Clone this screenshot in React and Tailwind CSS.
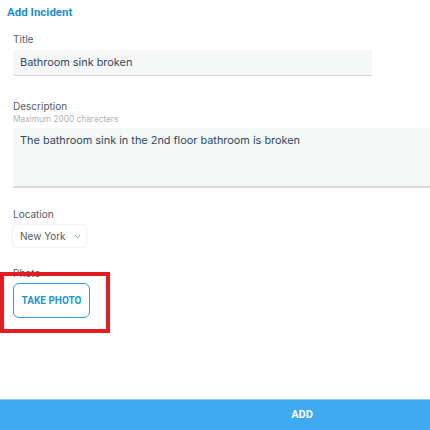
import React from "react";

const Label = ({ children, className = "" }) => (
  <div className={`text-[10px] leading-[13px] text-[#555b60] ${className}`}>{children}</div>
);

const roboto = { fontFamily: "Roboto, 'Liberation Sans', sans-serif" };

const App = () => {
  return (
    <div
      className="relative w-[430px] h-[430px] overflow-hidden bg-white flex flex-col"
      style={{ fontFamily: "Inter, 'Open Sans', sans-serif" }}
    >
      <div className="w-[604px] flex-1">
        <h1 className="ml-[7px] mt-[5px] text-[11.5px] leading-[14px] font-bold text-[#1b8fd2]" style={roboto}>
          Add Incident
        </h1>
        <div className="px-[13px]">
          <Label className="mt-[14px]">Title</Label>
          <div className="mt-[4px] h-[26px] w-[359px] rounded-[2px] bg-[#f6f7f7] border-b border-[#d4d7d9] px-[7px] flex items-center text-[10.9px] text-[#2d4b5e]">
            Bathroom sink broken
          </div>

          <Label className="mt-[24px]">Description</Label>
          <div className="mt-[1px] text-[8.3px] leading-[10px] text-[#b0b4b7]">Maximum 2000 characters</div>
          <div className="mt-[4px] h-[60px] w-full rounded-[2px] bg-[#f6f7f7] border-b-2 border-[#d9dcdd] px-[7px] pt-[5px] text-[10.9px] leading-[15px] text-[#2d4b5e]">
            The bathroom sink in the 2nd floor bathroom is broken
          </div>

          <Label className="mt-[20px]">Location</Label>
          <div className="mt-[4px] h-[22px] w-[73px] rounded-[3px] bg-white shadow-[0_0_2px_rgba(0,0,0,0.15)] pl-[7px] flex items-center gap-[8px] whitespace-nowrap text-[10px] text-[#555b60]">
            <span>New York</span>
            <svg width="7" height="5" viewBox="0 0 7 5" fill="none">
              <path d="M1 1.2 L3.5 3.6 L6 1.2" stroke="#8a9095" strokeWidth="0.9" />
            </svg>
          </div>

          <Label className="mt-[20px]">Photo</Label>
          <button className="mt-[3px] h-[35px] w-[77px] rounded-[6px] border-[1.5px] border-[#2f9bd8] text-[10px] font-bold text-[#2196d6] bg-white" style={roboto}>
            TAKE PHOTO
          </button>
        </div>
      </div>

      <div className="w-[604px] h-[31px] bg-[#3eaaf1] border-t border-[#8fcaf5] flex items-center justify-center text-[11px] font-bold text-white" style={roboto}>
        ADD
      </div>

      <div className="absolute left-0 top-[272px] w-[110px] h-[61px] border-[4px] border-[#e31b23]" />
    </div>
  );
};

export default App;
